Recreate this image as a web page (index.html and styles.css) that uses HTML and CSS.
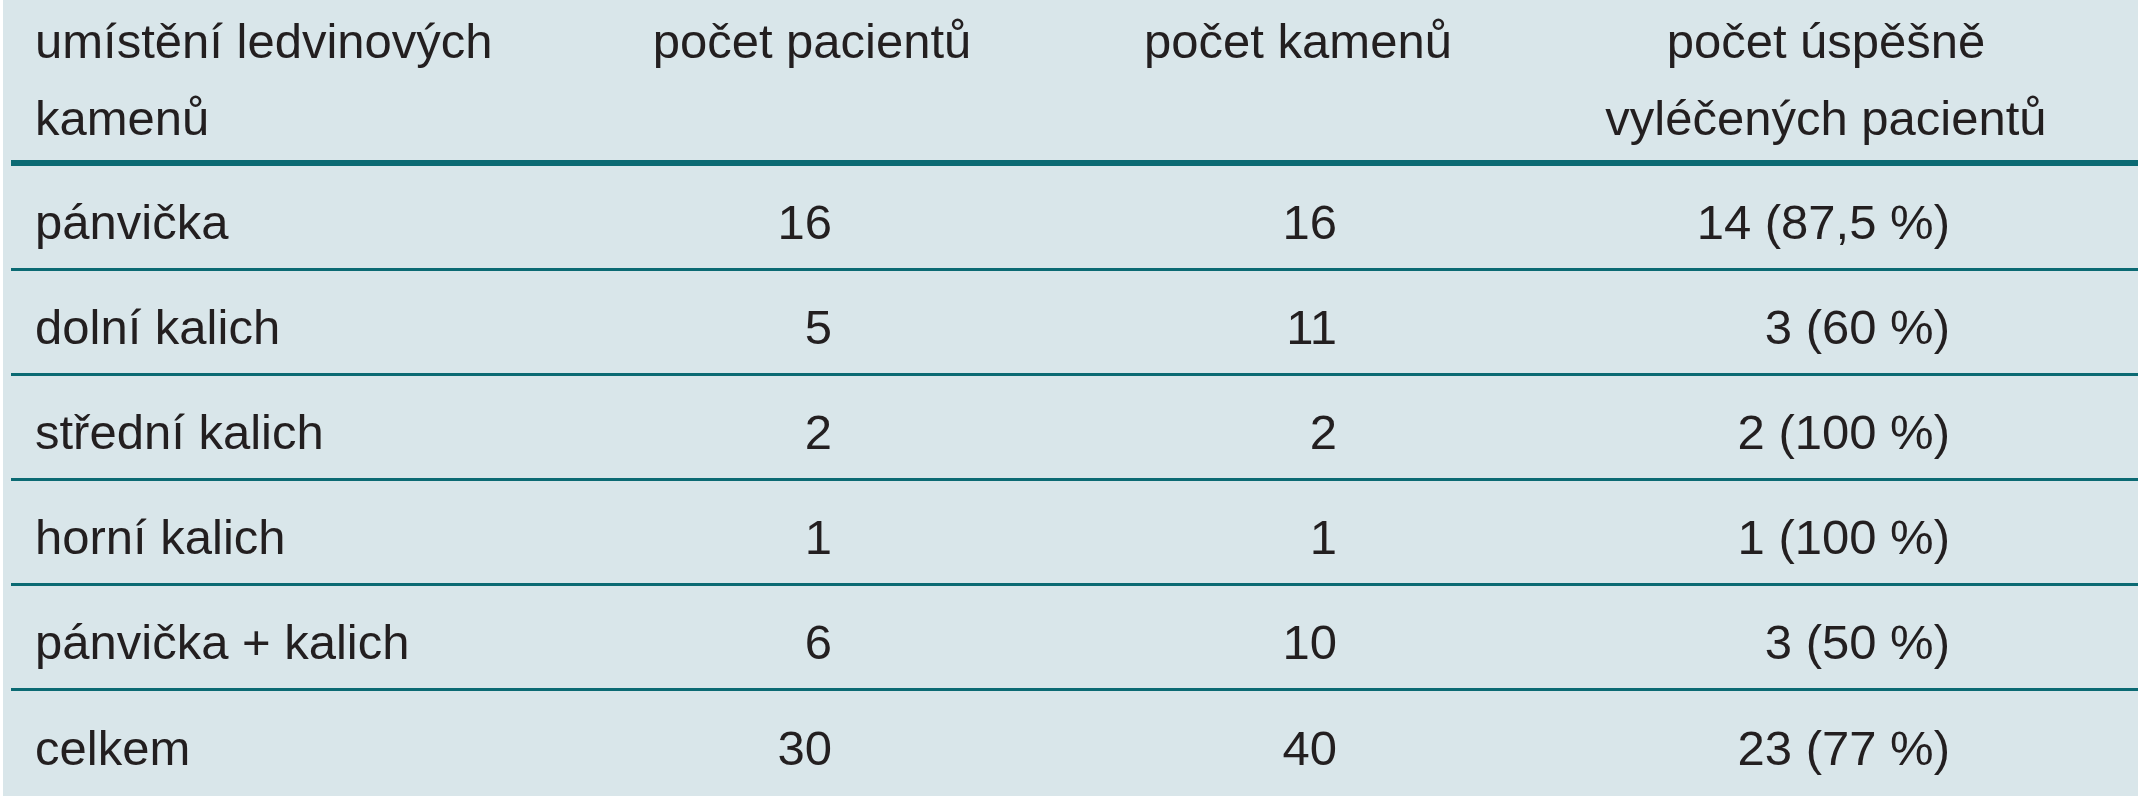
FILE: index.html
```html
<!DOCTYPE html>
<html lang="cs">
<head>
<meta charset="utf-8">
<title>Tabulka</title>
<link rel="stylesheet" href="styles.css">
</head>
<body>
<div class="sheet">
  <div class="row head">
    <div class="c1">umístění ledvinových<br>kamenů</div>
    <div class="c2">počet pacientů</div>
    <div class="c3">počet kamenů</div>
    <div class="c4">počet úspěšně<br>vyléčených pacientů</div>
  </div>
  <div class="row">
    <div class="c1">pánvička</div>
    <div class="c2">16</div>
    <div class="c3">16</div>
    <div class="c4">14 (87,5 %)</div>
  </div>
  <div class="row">
    <div class="c1">dolní kalich</div>
    <div class="c2">5</div>
    <div class="c3">11</div>
    <div class="c4">3 (60 %)</div>
  </div>
  <div class="row">
    <div class="c1">střední kalich</div>
    <div class="c2">2</div>
    <div class="c3">2</div>
    <div class="c4">2 (100 %)</div>
  </div>
  <div class="row">
    <div class="c1">horní kalich</div>
    <div class="c2">1</div>
    <div class="c3">1</div>
    <div class="c4">1 (100 %)</div>
  </div>
  <div class="row">
    <div class="c1">pánvička + kalich</div>
    <div class="c2">6</div>
    <div class="c3">10</div>
    <div class="c4">3 (50 %)</div>
  </div>
  <div class="row last">
    <div class="c1">celkem</div>
    <div class="c2">30</div>
    <div class="c3">40</div>
    <div class="c4">23 (77 %)</div>
  </div>
</div>
</body>
</html>
```

FILE: styles.css
```css
html, body {
  margin: 0;
  padding: 0;
  background: #ffffff;
}

.sheet {
  margin-left: 3px;
  padding-left: 8px;
  width: 2127px;
  height: 796px;
  background: #d9e6ea;
  font-family: "Liberation Sans", Arial, sans-serif;
  font-size: 49px;
  color: #231f20;
}

.row {
  display: grid;
  grid-template-columns: 549px 504px 468px 606px;
  align-items: center;
  box-sizing: border-box;
  height: 105px;
  padding-top: 10px;
  line-height: 55px;
  border-bottom: 3px solid #0b6a73;
  white-space: nowrap;
}

.row.last {
  border-bottom: none;
}

.row.head {
  height: 166px;
  padding-top: 3px;
  align-items: start;
  line-height: 77px;
  border-bottom: 6px solid #0b6a73;
}

.c1 {
  padding-left: 24px;
}

.c2 {
  text-align: right;
  padding-right: 232px;
}

.c3 {
  text-align: right;
  padding-right: 195px;
}

.c4 {
  text-align: right;
  padding-right: 188px;
}

.head .c2,
.head .c3 {
  text-align: center;
  padding-right: 0;
}

.head .c4 {
  text-align: center;
  padding-right: 18px;
}
```
